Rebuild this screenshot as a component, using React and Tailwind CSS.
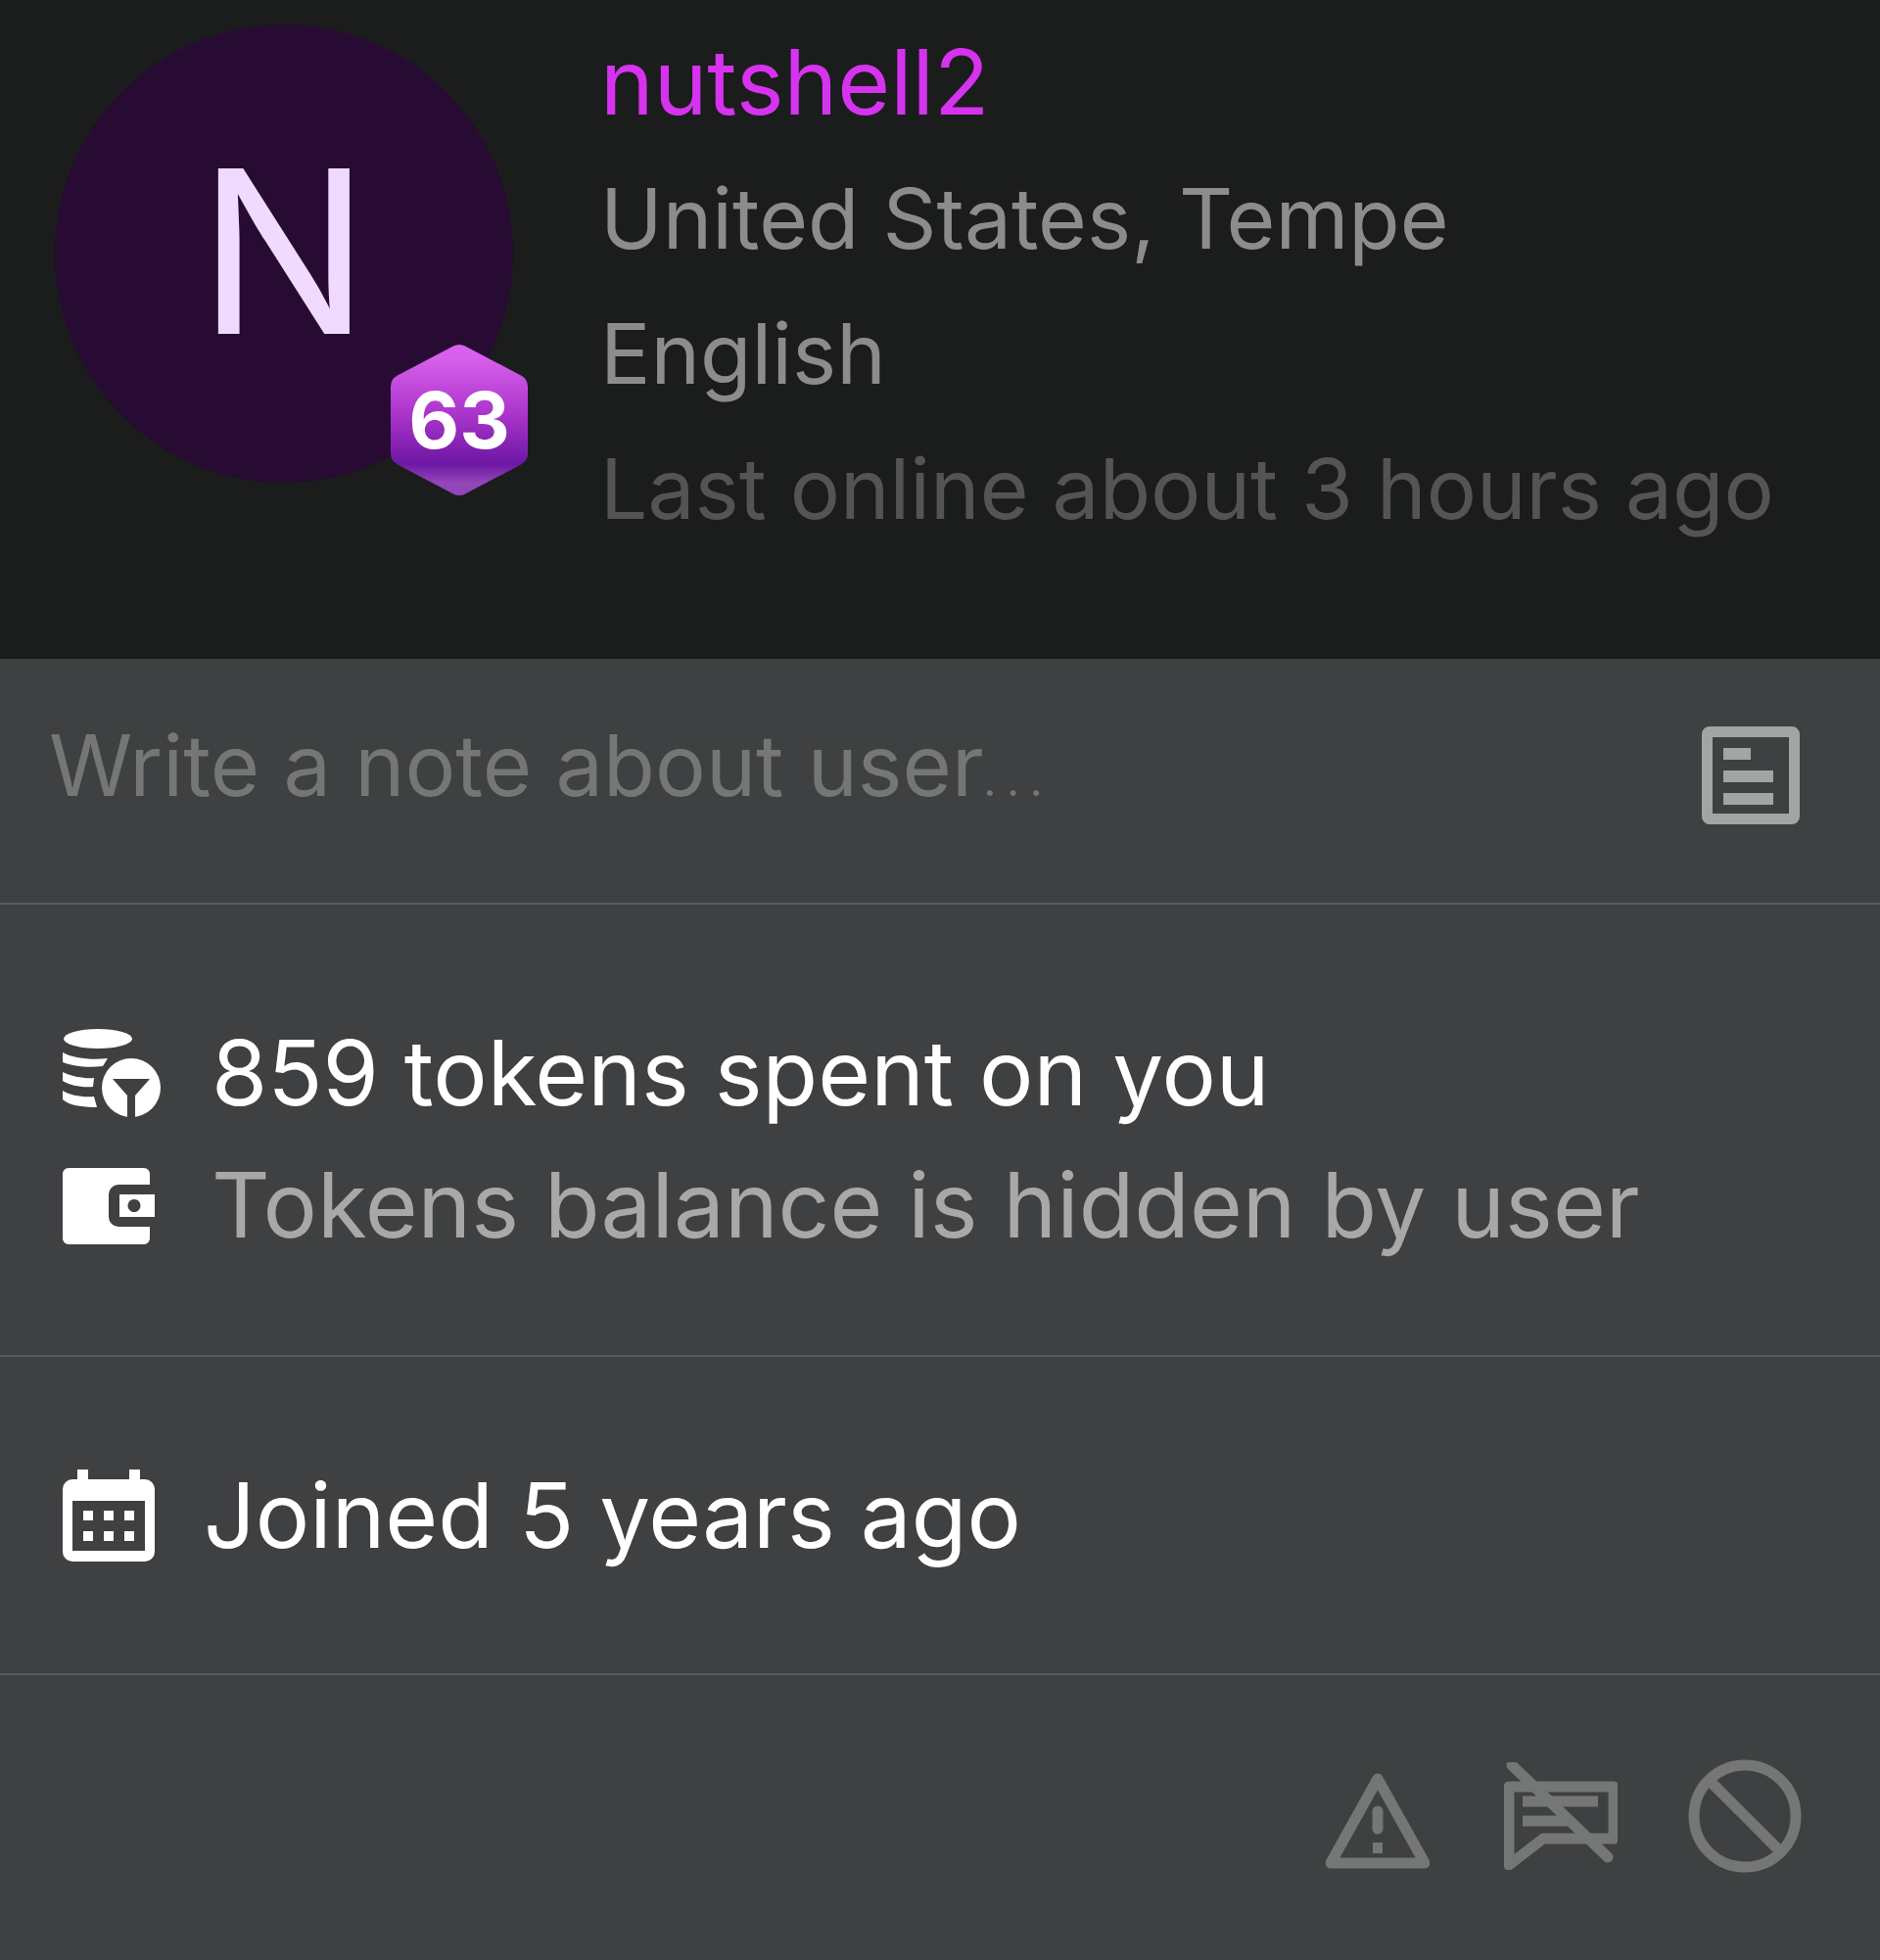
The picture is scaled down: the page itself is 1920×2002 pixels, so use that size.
import React from 'react';

const CoinsFilterIcon = () => (
    <svg width="104" height="92" viewBox="0 0 104 92" fill="white">
        <ellipse cx="36" cy="10" rx="35" ry="10" />
        <path d="M0 24 C10 30 30 32 46 30 L41 38 C26 40 10 38 0 34 Z" />
        <path d="M0 44 C10 49 24 51 32 50 L31 59 C20 60 8 58 0 53 Z" />
        <path d="M0 63 C8 68 20 70 32 69 L35 80 C20 80 6 78 0 72 Z" />
        <circle cx="70" cy="60" r="30" />
        <path d="M51 51 H89 L74 68 V92 H66 V68 Z" fill="#3f4041" />
    </svg>
);

const WalletIcon = () => (
    <svg width="96" height="80" viewBox="0 0 96 80" fill="white">
        <path d="M6 1 H83 a6 6 0 0 1 6 6 V18 H57 a10 10 0 0 0 -10 10 V51 a10 10 0 0 0 10 10 H89 V73 a6 6 0 0 1 -6 6 H6 a6 6 0 0 1 -6 -6 V7 a6 6 0 0 1 6 -6 Z" />
        <path fillRule="evenodd" d="M58 28 H94 V51 H58 Z M73 33 a6.5 6.5 0 1 0 0.01 0 Z" />
    </svg>
);

const CalendarIcon = () => (
    <svg width="94" height="94" viewBox="0 0 94 94" fill="white">
        <path fillRule="evenodd" d="M15 0 H26 V10 H68 V0 H79 V10 H84 a10 10 0 0 1 10 10 V84 a10 10 0 0 1 -10 10 H10 a10 10 0 0 1 -10 -10 V20 a10 10 0 0 1 10 -10 H15 Z M10 32 V83 H84 V32 Z" />
        <path d="M21 42h10v10H21z M42 42h10v10H42z M63 42h10v10H63z M21 63h10v10H21z M42 63h10v10H42z M63 63h10v10H63z" />
    </svg>
);

const NoteIcon = () => (
    <svg className="mt-[10px]" width="100" height="100" viewBox="0 0 100 100" fill="#a3a4a4">
        <path fillRule="evenodd" d="M8 0 H92 a8 8 0 0 1 8 8 V92 a8 8 0 0 1 -8 8 H8 a8 8 0 0 1 -8 -8 V8 a8 8 0 0 1 8 -8 Z M11 11 V89 H89 V11 Z" />
        <path d="M22 22h28v12H22z M22 45h51v12H22z M22 68h51v12H22z" />
    </svg>
);

const WarningIcon = () => (
    <svg className="mt-[10px] mr-[4px]" width="106" height="98" viewBox="0 0 106 98" fill="none" stroke="#757676" strokeWidth="11" strokeLinejoin="round">
        <path d="M53 6 L101 92 H5 Z" />
        <path d="M53 39 V57" strokeLinecap="round" />
        <path d="M48 71h10v11H48z" fill="#757676" stroke="none" />
    </svg>
);

const MuteChatIcon = () => (
    <svg width="116" height="110" viewBox="0 0 116 110" fill="none" stroke="#757676" strokeWidth="11" strokeLinejoin="round">
        <path d="M5 25 H112 V78 H40 L5 105 Z" />
        <path d="M19 40 H96 M19 60 H66" strokeLinecap="butt" />
        <path d="M8 3 L106 97" strokeLinecap="round" />
    </svg>
);

const BanIcon = () => (
    <svg width="116" height="116" viewBox="0 0 116 116" fill="none" stroke="#757676" strokeWidth="11">
        <circle cx="58" cy="58" r="52" />
        <path d="M21 21 L95 95" />
    </svg>
);

const LevelBadge = () => (
    <div className="absolute left-[398px] top-[351px] w-[142px] h-[156px] flex items-center justify-center">
        <svg className="absolute inset-0" width="142" height="156" viewBox="0 0 142 156">
            <defs>
                <linearGradient id="badgeFill" x1="0" y1="0" x2="0" y2="1">
                    <stop offset="0" stopColor="#d860ec" />
                    <stop offset="0.45" stopColor="#ab35cb" />
                    <stop offset="0.85" stopColor="#6d17a4" />
                    <stop offset="1" stopColor="#9346b8" />
                </linearGradient>
            </defs>
            <path d="M71 14 L128 44 V112 L71 142 L14 112 V44 Z" fill="url(#badgeFill)" stroke="url(#badgeFill)" strokeWidth="26" strokeLinejoin="round" />
        </svg>
        <span className="relative text-white text-[80px] font-bold leading-none">63</span>
    </div>
);

const App = () => {
    return (
        <div className="w-[1920px] h-[2002px] flex flex-col bg-[#3f4041] font-['Inter',sans-serif] overflow-hidden">
            {/* Profile header */}
            <div className="h-[673px] shrink-0 bg-[#1b1c1c] relative flex">
                <div className="w-[468px] h-[468px] ml-[56px] mt-[25px] pb-[4px] rounded-full bg-[#270b33] flex items-center justify-center text-[232px] leading-none text-[#f0daff]">
                    N
                </div>
                <LevelBadge />
                <div className="ml-[89px] pt-[14px] flex flex-col leading-[138px] whitespace-nowrap">
                    <div className="text-[92.5px] text-[#d633ef]">nutshell2</div>
                    <div className="text-[85.6px] mt-[2px] text-[#8c8c8c]">United States, Tempe</div>
                    <div className="text-[85.6px] text-[#8c8c8c]">English</div>
                    <div className="text-[85.6px] text-[#545454]">Last online about 3 hours ago</div>
                </div>
            </div>

            {/* Note */}
            <div className="h-[251px] shrink-0 border-b-2 border-[#5a5b5c] flex items-start justify-between pl-[50px] pr-[82px] pt-[59px]">
                <div className="text-[86.5px] leading-[100px] text-[#757676]">
                    Write a note about user<span className="text-[44px] tracking-[11px]">...</span>
                </div>
                <NoteIcon />
            </div>

            {/* Tokens */}
            <div className="h-[462px] shrink-0 border-b-2 border-[#5a5b5c] flex flex-col pl-[64px] pt-[123px] gap-[35px]">
                <div className="flex items-center h-[100px]">
                    <CoinsFilterIcon />
                    <span className="ml-[48px] mb-[4px] text-[92.5px] leading-none text-white">859 tokens spent on you</span>
                </div>
                <div className="flex items-center h-[100px]">
                    <WalletIcon />
                    <span className="ml-[56px] mb-[4px] text-[92.5px] leading-none text-[#a8a8a8]">Tokens balance is hidden by user</span>
                </div>
            </div>

            {/* Joined */}
            <div className="h-[325px] shrink-0 border-b-2 border-[#5a5b5c] flex items-center pl-[64px]">
                <CalendarIcon />
                <span className="ml-[50px] text-[92.5px] leading-none text-white">Joined 5 years ago</span>
            </div>

            {/* Actions */}
            <div className="flex-1 flex items-center justify-end gap-[72px] pr-[80px] pb-[4px]">
                <WarningIcon />
                <MuteChatIcon />
                <BanIcon />
            </div>
        </div>
    );
};

export default App;
